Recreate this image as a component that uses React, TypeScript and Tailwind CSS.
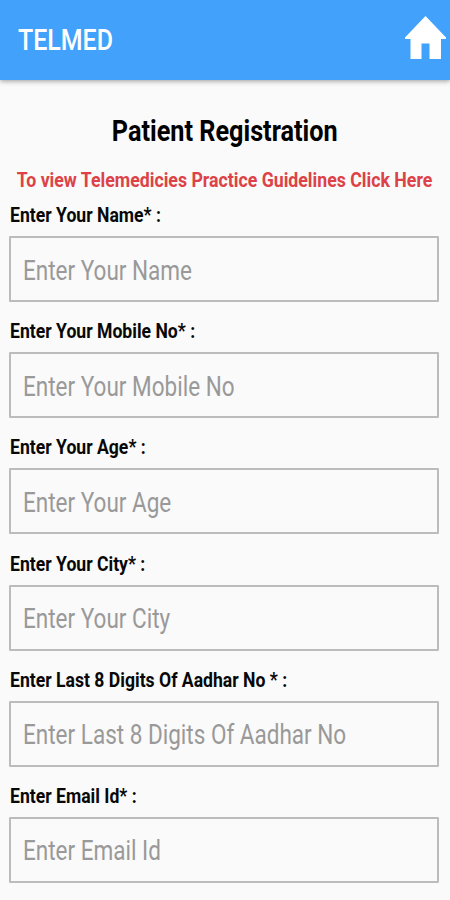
const fields = [
  { label: "Enter Your Name* :", hint: "Enter Your Name" },
  { label: "Enter Your Mobile No* :", hint: "Enter Your Mobile No" },
  { label: "Enter Your Age* :", hint: "Enter Your Age" },
  { label: "Enter Your City* :", hint: "Enter Your City" },
  { label: "Enter Last 8 Digits Of Aadhar No * :", hint: "Enter Last 8 Digits Of Aadhar No" },
  { label: "Enter Email Id* :", hint: "Enter Email Id" },
];

function Field({ label, hint }: { label: string; hint: string }) {
  return (
    <div className="h-[116.2px]">
      <div className="h-8 pl-px">
        <span className="inline-block origin-left scale-x-[0.88] whitespace-nowrap text-[20px] leading-[23px] font-bold text-[#080808]">
          {label}
        </span>
      </div>
      <div className="flex h-[66px] items-center rounded-[1px] border-2 border-[#bcbcbc] pl-[12px] pt-[3px]">
        <span className="inline-block origin-left scale-x-[0.834] whitespace-nowrap text-[27px] leading-8 text-[#999]">
          {hint}
        </span>
      </div>
    </div>
  );
}

export default function App() {
  return (
    <div className="flex h-[900px] w-[450px] flex-col overflow-hidden bg-[#fafafa] font-['Roboto',sans-serif]">
      <header className="flex h-20 shrink-0 items-center justify-between bg-[#42a1fb] pl-[18px] pr-[4px] shadow-[0_1px_5px_rgba(0,0,0,0.4)]">
        <span className="inline-block origin-left scale-x-[0.86] text-[29px] leading-8 font-medium text-white">TELMED</span>
        <svg className="mt-[-5px] h-[43px] w-[41px]" viewBox="0 0 41 43" fill="#fff">
          <path d="M20.5 0 L41 21.5 V23 H36 V43 H24.5 V27.5 H16.5 V43 H5.5 V23 H0 V21.5 Z" />
        </svg>
      </header>
      <main className="flex flex-col pr-[11.5px] pl-[9px]">
        <h1 className="mt-[34px] flex h-[35px] justify-center pl-[2px]">
          <span className="inline-block scale-x-[0.87] whitespace-nowrap text-[29px] leading-[35px] font-bold text-black">
            Patient Registration
          </span>
        </h1>
        <a className="mt-[19px] flex h-6 justify-center pl-px" href="#">
          <span className="inline-block scale-x-[0.886] whitespace-nowrap text-[20px] leading-6 font-bold text-[#dc4247]">
            To view Telemedicies Practice Guidelines Click Here
          </span>
        </a>
        <div className="mt-[12px]">
          {fields.map((f) => (
            <Field key={f.label} {...f} />
          ))}
        </div>
      </main>
    </div>
  );
}
